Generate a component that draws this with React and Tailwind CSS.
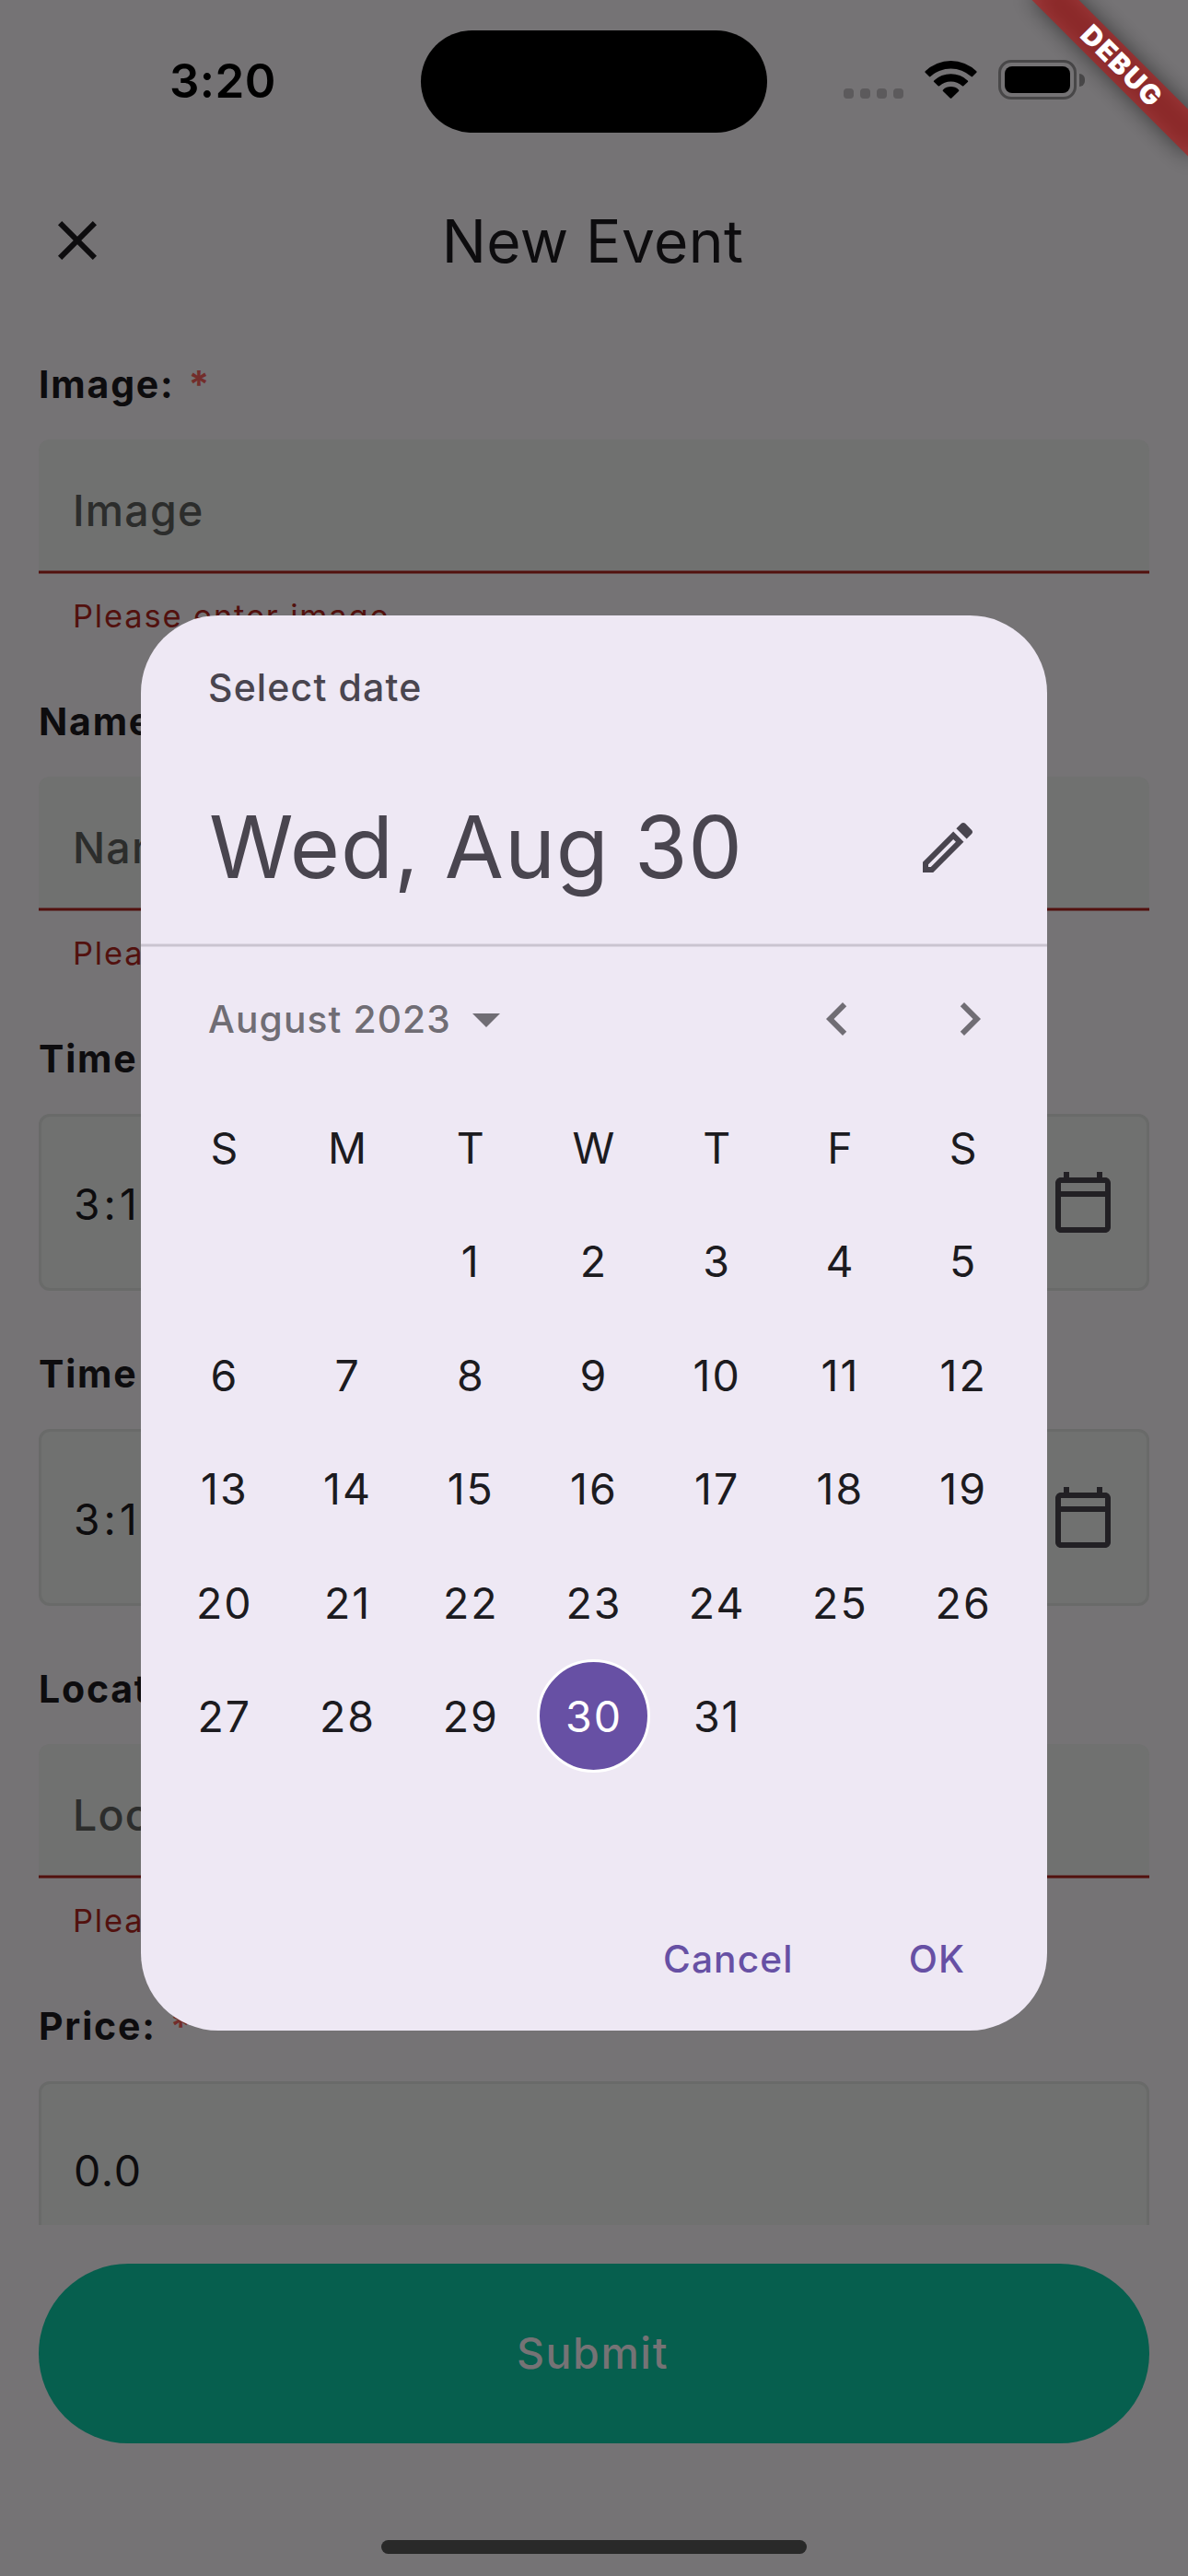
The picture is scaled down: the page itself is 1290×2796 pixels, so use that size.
import React from "react";

const WEEKDAYS = ["S", "M", "T", "W", "T", "F", "S"];
const LEADING_BLANKS = 2;
const SELECTED_DAY = 30;
const CELLS = [
  ...Array(LEADING_BLANKS).fill(null),
  ...Array.from({ length: 31 }, (_, i) => i + 1),
];

function Icon({ d, className }) {
  return (
    <svg viewBox="0 0 24 24" fill="currentColor" className={className}>
      <path d={d} />
    </svg>
  );
}

const CLOSE =
  "M19 6.41 17.59 5 12 10.59 6.41 5 5 6.41 10.59 12 5 17.59 6.41 19 12 13.41 17.59 19 19 17.59 13.41 12z";
const CALENDAR =
  "M20 3h-1V1h-2v2H7V1H5v2H4c-1.1 0-2 .9-2 2v16c0 1.1.9 2 2 2h16c1.1 0 2-.9 2-2V5c0-1.1-.9-2-2-2zm0 18H4V10h16v11zm0-13H4V5h16v3z";
const EDIT =
  "m14.06 9.02.92.92L5.92 19H5v-.92l9.06-9.06M17.66 3c-.25 0-.51.1-.7.29l-1.83 1.83 3.75 3.75 1.83-1.83c.39-.39.39-1.02 0-1.41l-2.34-2.34c-.2-.2-.45-.29-.71-.29zm-3.6 3.19L3 17.25V21h3.75L17.81 9.94l-3.75-3.75z";
const CHEVRON_LEFT = "M15.41 7.41 14 6l-6 6 6 6 1.41-1.41L10.83 12z";
const CHEVRON_RIGHT = "M10 6 8.59 7.41 13.17 12l-4.58 4.59L10 18l6-6z";

function StatusBar() {
  return (
    <div className="flex h-[177px] items-start text-black">
      <div className="mt-[58px] w-[457px] pl-[184px] text-[51px] leading-[60px] font-semibold tracking-[0.4px]">
        3:20
      </div>
      <div className="mt-[33px] h-[111px] w-[376px] rounded-full bg-black" />
      <div className="mt-[65px] flex h-[43px] items-center pl-[83px]">
        <div className="mb-px flex gap-[7px] self-end">
          {[0, 1, 2, 3].map((i) => (
            <span key={i} className="size-[11px] rounded-[4px] bg-[#5c5a5c]" />
          ))}
        </div>
        <svg viewBox="0 0 57 42" className="ml-[23px] h-[42px] w-[57px] self-start" fill="black">
          <path d="M0.7 12.2A40 40 0 0 1 56.3 12.2Q57 13 56.3 13.8L52 18.1Q51.300 18.700 50.600 18.100A32.500 32.500 0 0 0 6.400 18.100Q5.700 18.700 5 18.100L.7 13.800Q0 13 .7 12.200Z" />
          <path d="M10.200 22.500A26.600 26.600 0 0 1 46.800 22.500Q47.600 23.300 46.800 24.100L42.300 28.200Q41.600 28.800 40.900 28.200A18.500 18.500 0 0 0 16.100 28.200Q15.400 28.800 14.700 28.200L10.200 24.100Q9.400 23.300 10.200 22.500Z" />
          <path d="M20 32.400A12.600 12.600 0 0 1 37 32.400Q37.700 33.200 37 34L29.300 41.500Q28.500 42.200 27.700 41.500L20 34Q19.300 33.200 20 32.400Z" />
        </svg>
        <div className="ml-[23px] flex h-[43px] w-[85px] rounded-[14px] border-[3.500px] border-[#484748] p-1">
          <div className="w-full rounded-[8px] bg-black" />
        </div>
        <div className="ml-[3px] h-[14px] w-[6px] rounded-r-full bg-[#484748]" />
      </div>
    </div>
  );
}

function AppBar() {
  return (
    <div className="grid h-[168px] grid-cols-[1fr_auto_1fr] items-center pl-12 text-[#0d0c0e]">
      <Icon d={CLOSE} className="size-[72px]" />
      <h1 className="-ml-12 pt-[2px] pr-[3px] text-[64px] tracking-[0.4px]">New Event</h1>
    </div>
  );
}

function Label({ children }) {
  return (
    <div className="flex h-[60px] items-center gap-[15px] pt-[2px] text-[41px] font-bold tracking-[1.800px] text-[#0d0c0e]">
      <span>{children}</span>
      <span className="text-[#732d2b]">*</span>
    </div>
  );
}

function TextField({ label, placeholder, error }) {
  return (
    <div className="flex h-[366px] shrink-0 flex-col">
      <Label>{label}</Label>
      <div className="mt-[30px] flex h-[142px] items-center rounded-t-[12px] bg-[#707170] pt-[13px] pr-9 pl-[37px] text-[46.500px] font-medium tracking-[1.200px] text-[#2c2d2c]">
        {placeholder}
      </div>
      <div className="h-1 border-y border-[#623f3f] bg-[#52110e]" />
      <div className="mt-[21px] px-9 pl-[37px] text-[34.500px] leading-[50px] tracking-[1.820px] text-[#52110e]">
        {error}
      </div>
    </div>
  );
}

function BoxField({ label, value, calendar }) {
  return (
    <div className="flex h-[342px] shrink-0 flex-col">
      <Label>{label}</Label>
      <div className="mt-[30px] flex h-[192px] items-center justify-between rounded-[12px] border-[3px] border-[#696a69] bg-[#707170] pr-[33px] pl-[35px] text-[#0d0c0e]">
        <span className={calendar ? "pt-[4px] text-[46px] tracking-[4.200px]" : "pt-[4px] text-[46.500px] tracking-[1.700px]"}>
          {value}
        </span>
        {calendar && <Icon d={CALENDAR} className="size-[72px] text-[#222024]" />}
      </div>
    </div>
  );
}

function DatePicker() {
  return (
    <div className="flex h-[1536px] w-[984px] flex-col overflow-hidden rounded-[84px] bg-[#eee8f4]">
      <div className="flex h-[356px] flex-col pt-[48px] pr-[72px] pl-[72px] text-[#49454f]">
        <div className="pl-px text-[41px] leading-[60px] font-medium tracking-[1.150px]">Select date</div>
        <div className="mt-[72px] flex h-36 items-center justify-between">
          <div className="pl-[2px] text-[93px] tracking-[0.950px]">Wed, Aug 30</div>
          <Icon d={EDIT} className="size-[72px]" />
        </div>
      </div>
      <div className="h-1 border-y border-[#dcd6e2] bg-[#cac4d0]" />

      <div className="flex h-[156px] items-center pr-12 pl-[73px] text-[#706d74]">
        <span className="pt-[2px] text-[40.700px] font-medium tracking-[1.120px]">August 2023</span>
        <svg viewBox="0 0 30 15" className="mt-[3px] ml-[23px] h-[15px] w-[30px]" fill="currentColor">
          <path d="M0 0h30L15 15z" />
        </svg>
        <div className="ml-auto flex gap-[72px]">
          <Icon d={CHEVRON_LEFT} className="size-[72px]" />
          <Icon d={CHEVRON_RIGHT} className="size-[72px]" />
        </div>
      </div>

      <div className="grid h-[864px] grid-cols-7 grid-rows-7 px-6 text-[46.500px] tracking-[2px] text-[#1c1b1f]">
        {WEEKDAYS.map((d, i) => (
          <div key={i} className="flex items-center justify-center pt-[2px] pl-px">
            {d}
          </div>
        ))}
        {CELLS.map((day, i) =>
          day === SELECTED_DAY ? (
            <div key={"c" + i} className="flex items-center justify-center">
              <span className="flex size-[123px] items-center justify-center rounded-full border-[3px] border-white bg-[#6750a4] pt-[2px] text-white">
                {day}
              </span>
            </div>
          ) : (
            <div key={"c" + i} className="flex items-center justify-center pt-[2px]">
              {day}
            </div>
          )
        )}
      </div>

      <div className="flex h-[156px] items-center justify-end gap-[125px] pt-[2px] pr-[89px] text-[40.700px] font-medium tracking-[1.100px] text-[#6750a4]">
        <button>Cancel</button>
        <button>OK</button>
      </div>
    </div>
  );
}

function DebugBanner() {
  return (
    <div className="absolute top-0 right-0 size-[240px] overflow-hidden">
      <div className="absolute top-[54px] left-[48px] h-9 w-[240px] rotate-45">
        <div className="absolute inset-0 bg-black/50 blur-[12px]" />
        <div className="absolute inset-0 flex items-center justify-center bg-[#b71c1c]/63 text-[29.700px] leading-none font-black tracking-[1.600px] text-white">
          DEBUG
        </div>
      </div>
    </div>
  );
}

export default function App() {
  return (
    <div className="relative flex h-[2796px] w-[1290px] flex-col overflow-hidden bg-[#757375] font-['Inter',sans-serif] whitespace-nowrap">
      <StatusBar />
      <AppBar />
      <div className="flex h-[2070px] shrink-0 flex-col overflow-hidden px-[42px] pt-[42px]">
        <TextField label="Image:" placeholder="Image" error="Please enter image" />
        <TextField label="Name:" placeholder="Name" error="Please enter name" />
        <BoxField label="Time start:" value="3:19 PM" calendar />
        <BoxField label="Time end:" value="3:19 PM" calendar />
        <TextField label="Location:" placeholder="Location" error="Please enter location" />
        <BoxField label="Price:" value="0.0" />
      </div>
      <button className="mx-[42px] mt-[42px] h-[195px] shrink-0 rounded-full bg-[#065f4e] pr-[3px] text-[46.500px] font-medium tracking-[1.600px] text-[#757375]">
        Submit
      </button>
      <div className="mt-[105px] h-[15px] w-[462px] shrink-0 self-center rounded-full bg-[#292929]" />

      <div className="absolute inset-0 flex items-start justify-center pt-[668px]">
        <DatePicker />
      </div>
      <DebugBanner />
    </div>
  );
}
